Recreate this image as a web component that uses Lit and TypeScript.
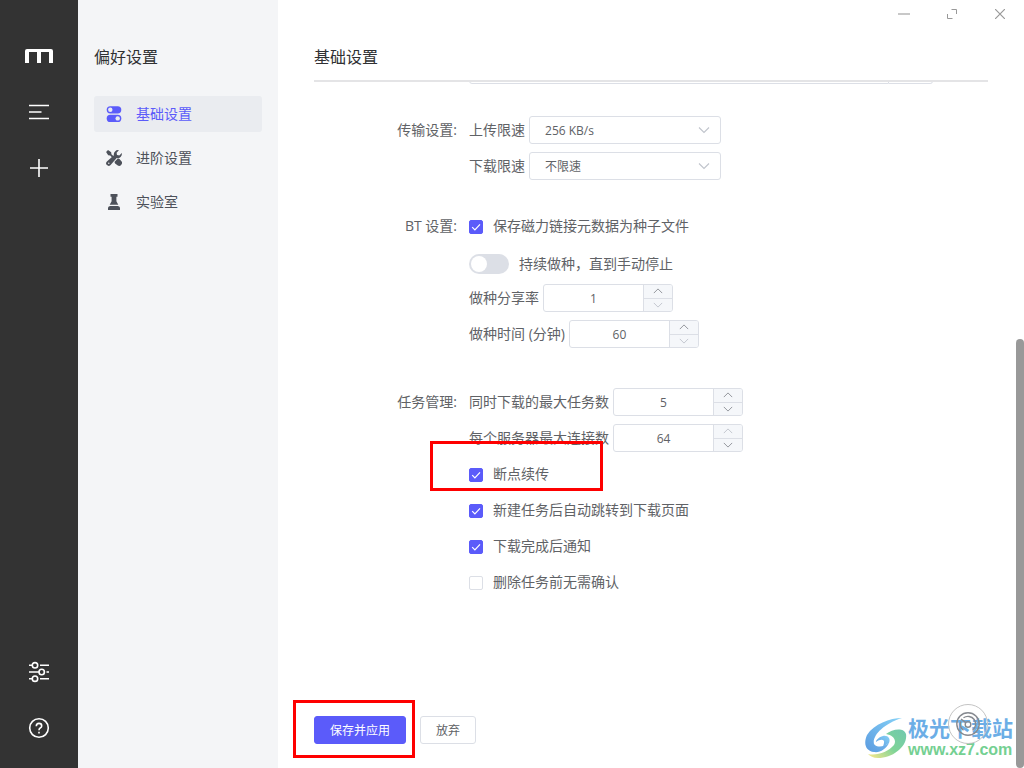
import { LitElement, html, css, svg, nothing } from "lit";
import { customElement, property } from "lit/decorators.js";
import { classMap } from "lit/directives/class-map.js";

const FONT = css`"Open Sans", "Noto Sans CJK SC", sans-serif`;

const chevron = (dir: "up" | "down") => html`
  <svg viewBox="0 0 12 12" width="12" height="12" aria-hidden="true">
    <path d=${dir === "down" ? "M1 3.5 6 8.5 11 3.5" : "M1 8.5 6 3.5 11 8.5"}
      fill="none" stroke="currentColor" stroke-width="1.1" />
  </svg>`;

@customElement("icon-rail")
export class IconRail extends LitElement {
  static styles = css`
    :host {
      display: flex;
      flex-direction: column;
      justify-content: space-between;
      width: 78px;
      flex: none;
      box-sizing: border-box;
      padding: 28px 0 12px;
      background: #333;
    }
    .group { display: flex; flex-direction: column; }
    .item {
      height: 56px;
      padding: 0;
      border: 0;
      background: none;
      color: #fff;
      display: flex;
      align-items: center;
      justify-content: center;
    }
  `;

  render() {
    return html`
      <nav class="group">
        <button class="item" aria-label="Motrix">
          <svg width="28" height="14" viewBox="0 0 28 14">
            <path fill="currentColor" d="M2 0H26Q28 0 28 2V14H24V3H16V14H12V3H4V14H0V2Q0 0 2 0Z" />
          </svg>
        </button>
        <button class="item" aria-label="任务列表">
          <svg width="24" height="24" viewBox="0 0 24 24" fill="none" stroke="currentColor" stroke-width="1.6">
            <path d="M2 5.5H22M2 12H14.5M2 18.5H22" />
          </svg>
        </button>
        <button class="item" aria-label="新建任务">
          <svg width="24" height="24" viewBox="0 0 24 24" fill="none" stroke="currentColor" stroke-width="1.6">
            <path d="M3 12H21M12 3V21" />
          </svg>
        </button>
      </nav>
      <nav class="group">
        <button class="item" aria-label="偏好设置">
          <svg width="24" height="24" viewBox="0 0 24 24" fill="none" stroke="currentColor" stroke-width="1.6">
            <path d="M2 5.3H5M13 5.3H22M2 12H12M19.5 12H22M2 18.7H5M13 18.7H22" />
            <circle cx="8" cy="5.3" r="2.7" />
            <circle cx="14.7" cy="12" r="2.7" />
            <circle cx="8" cy="18.7" r="2.7" />
          </svg>
        </button>
        <button class="item" aria-label="帮助">
          <svg width="24" height="24" viewBox="0 0 24 24" fill="none" stroke="currentColor" stroke-width="1.6">
            <circle cx="12" cy="12" r="9.3" />
            <path d="M9.3 10.2Q9.3 7.4 12 7.4T14.7 9.9Q14.7 11.2 13.2 12Q12 12.7 12 14.2M12 15.8V17.6" />
          </svg>
        </button>
      </nav>
    `;
  }
}

const toggles = svg`
  <rect x="0.7" y="0.2" width="14.6" height="7.2" rx="3.6" fill="currentColor" />
  <circle cx="4.3" cy="3.8" r="2.2" fill="#eaecf0" />
  <rect x="0.7" y="8.8" width="14.6" height="7.2" rx="3.6" fill="currentColor" />
  <circle cx="11.7" cy="12.4" r="2.2" fill="#eaecf0" />`;

const tools = svg`
  <path fill="currentColor" d="M.1 1.9 2 0 5.2 2.2 5.4 4.2 8.4 7.1 7.1 8.4 4.2 5.4 2.2 5.2Z" />
  <path fill="currentColor" d="M15.8 3.1A4.3 4.3 0 0 1 10.7 8.1L4.6 15Q2.7 16.8 .9 15.1T.9 11.4L7.9 5.3A4.3 4.3 0 0 1 12.9 .2L10.6 2.7 11 5 13.3 5.4Z" />
  <path fill="currentColor" d="M8.6 11.8 11.8 8.6Q12.8 8.4 13.5 9.1L15.6 11.4Q16.8 13 15.3 14.7 13.8 16.6 11.8 15.6L9.1 13.4Q8.5 12.7 8.6 11.8Z" />
  <circle cx="2.8" cy="13.3" r="0.7" fill="#f4f5f7" />`;

const lab = svg`
  <path fill="currentColor" d="M4.5 0H11.5V2.8H10.4V7.3L12.3 10.7H3.7L5.6 7.3V2.8H4.5Z" />
  <path fill="currentColor" d="M4 12H12Q14 12.3 14 14V16H2V14Q2 12.3 4 12Z" />`;

@customElement("settings-nav")
export class SettingsNav extends LitElement {
  static styles = css`
    :host {
      display: block;
      width: 200px;
      flex: none;
      box-sizing: border-box;
      padding: 45px 16px 0;
      background: #f4f5f7;
      font-family: ${FONT};
    }
    .title { margin: 0 0 27px; font-size: 16px; line-height: 24px; font-weight: 400; color: #303133; }
    .list { list-style: none; margin: 0; padding: 0; display: flex; flex-direction: column; gap: 8px; }
    .link {
      display: flex;
      align-items: center;
      gap: 14px;
      height: 36px;
      padding: 0 12px;
      border-radius: 3px;
      font-size: 14px;
      line-height: 20px;
      color: #4d515a;
      text-decoration: none;
    }
    .link.active { background: #eaecf0; color: #5b5bfa; }
  `;

  private items = [
    { text: "基础设置", icon: toggles, active: true },
    { text: "进阶设置", icon: tools, active: false },
    { text: "实验室", icon: lab, active: false },
  ];

  render() {
    return html`
      <h2 class="title">偏好设置</h2>
      <ul class="list">
        ${this.items.map((i) => html`
          <li><a href="#" class=${classMap({ link: true, active: i.active })}>
            <svg width="16" height="16" viewBox="0 0 16 16" aria-hidden="true">${i.icon}</svg>${i.text}
          </a></li>`)}
      </ul>
    `;
  }
}

@customElement("number-field")
export class NumberField extends LitElement {
  @property() label = "";
  @property() value = "";
  @property({ type: Boolean }) atmin = false;
  @property({ type: Boolean }) atmax = false;

  static styles = css`
    :host { display: flex; align-items: center; gap: 4px; height: 28px; }
    .box {
      display: flex;
      width: 130px;
      height: 28px;
      box-sizing: border-box;
      border: 1px solid #dcdfe6;
      border-radius: 3px;
      overflow: hidden;
      background: #fff;
    }
    .input {
      flex: 1;
      min-width: 0;
      border: 0;
      padding: 0;
      background: none;
      text-align: center;
      font: 12px ${FONT};
      color: #606266;
      outline: 0;
    }
    .steps {
      display: flex;
      flex-direction: column;
      width: 28px;
      border-left: 1px solid #dcdfe6;
      background: #f5f7fa;
    }
    .step {
      flex: 1;
      min-height: 0;
      display: flex;
      align-items: center;
      justify-content: center;
      border: 0;
      padding: 0;
      background: none;
      color: #8c8f96;
    }
    .step + .step { border-top: 1px solid #dcdfe6; }
    .step:disabled { color: #c0c4cc; }
    .step svg { width: 10px; height: 10px; }
  `;

  render() {
    return html`
      <label for="n">${this.label}</label>
      <div class="box">
        <input class="input" id="n" type="text" inputmode="numeric" .value=${this.value} />
        <div class="steps">
          <button class="step" aria-label="增加" ?disabled=${this.atmax}>${chevron("up")}</button>
          <button class="step" aria-label="减少" ?disabled=${this.atmin}>${chevron("down")}</button>
        </div>
      </div>
    `;
  }
}

@customElement("settings-form")
export class SettingsForm extends LitElement {
  static styles = css`
    :host { display: block; font: 14px/20px ${FONT}; color: #606266; }
    .form { display: flex; flex-direction: column; gap: 32px; }
    .group { display: grid; grid-template-columns: 23% 1fr; }
    .group.spaced { margin-bottom: 8px; }
    .caption { text-align: right; padding-right: 12px; line-height: 28px; }
    .rows { display: flex; flex-direction: column; gap: 8px; }
    .path { display: flex; height: 28px; margin: -26px 55px 0 0; }
    .path-input {
      flex: 1;
      min-width: 0;
      box-sizing: border-box;
      border: 1px solid #dcdfe6;
      border-radius: 3px 0 0 3px;
      background: #fff;
    }
    .path-button {
      width: 44px;
      border: 1px solid #dcdfe6;
      border-left: 0;
      border-radius: 0 3px 3px 0;
      background: #fff;
    }
    .row { display: flex; align-items: center; gap: 4px; height: 28px; }
    .select-wrap { display: grid; width: 192px; align-items: center; color: #c0c4cc; }
    .select-wrap > * { grid-area: 1 / 1; }
    .select-wrap svg { justify-self: end; margin-right: 11px; pointer-events: none; }
    .select {
      appearance: none;
      width: 100%;
      height: 28px;
      padding: 0 30px 0 15px;
      border: 1px solid #dcdfe6;
      border-radius: 3px;
      background: #fff;
      color: #606266;
      font: 12px ${FONT};
    }
    .row.check { gap: 10px; }
    .row.switching { gap: 10px; padding-top: 4px; box-sizing: border-box; }
    .tick { display: grid; flex: none; padding-top: 2px; }
    .tick > * { grid-area: 1 / 1; }
    .tick svg { pointer-events: none; }
    .checkbox {
      appearance: none;
      width: 14px;
      height: 14px;
      margin: 0;
      box-sizing: border-box;
      border: 1px solid #dcdfe6;
      border-radius: 2px;
      background: #fff;
    }
    .checkbox:checked { background: #5b5bfa; border-color: #5b5bfa; }
    .switch {
      appearance: none;
      width: 40px;
      height: 20px;
      margin: 0;
      padding: 2px;
      box-sizing: border-box;
      border-radius: 10px;
      background: #dcdfe6;
    }
    .switch::before { content: ""; display: block; width: 16px; height: 16px; border-radius: 50%; background: #fff; }
  `;

  private check(id: string, text: string, checked: boolean) {
    return html`
      <div class="row check">
        <span class="tick">
          <input class="checkbox" type="checkbox" id=${id} .checked=${checked} />
          ${checked ? html`<svg width="14" height="14" viewBox="0 0 14 14" aria-hidden="true">
            <path d="M3.2 7.2 5.9 9.9 11 4.4" fill="none" stroke="#fff" stroke-width="1.2" /></svg>` : nothing}
        </span>
        <label for=${id}>${text}</label>
      </div>`;
  }

  private select(id: string, text: string, value: string) {
    return html`
      <div class="row">
        <label for=${id}>${text}</label>
        <span class="select-wrap">
          <select class="select" id=${id}><option>${value}</option></select>
          ${chevron("down")}
        </span>
      </div>`;
  }

  render() {
    return html`
      <div class="form">
        <div class="group">
          <span></span>
          <div class="path">
            <input class="path-input" type="text" aria-label="下载路径" />
            <button class="path-button" aria-label="选择文件夹"></button>
          </div>
        </div>
        <div class="group">
          <div class="caption">传输设置:</div>
          <div class="rows">
            ${this.select("up", "上传限速", "256 KB/s")}
            ${this.select("down", "下载限速", "不限速")}
          </div>
        </div>
        <div class="group spaced">
          <div class="caption">BT 设置:</div>
          <div class="rows">
            ${this.check("meta", "保存磁力链接元数据为种子文件", true)}
            <div class="row switching">
              <input class="switch" type="checkbox" role="switch" id="seed" />
              <label for="seed">持续做种，直到手动停止</label>
            </div>
            <number-field label="做种分享率" value="1" atmin></number-field>
            <number-field label="做种时间 (分钟)" value="60" atmin></number-field>
          </div>
        </div>
        <div class="group">
          <div class="caption">任务管理:</div>
          <div class="rows">
            <number-field label="同时下载的最大任务数" value="5"></number-field>
            <number-field label="每个服务器最大连接数" value="64" atmax></number-field>
            ${this.check("resume", "断点续传", true)}
            ${this.check("jump", "新建任务后自动跳转到下载页面", true)}
            ${this.check("notify", "下载完成后通知", true)}
            ${this.check("confirm", "删除任务前无需确认", false)}
          </div>
        </div>
      </div>
    `;
  }
}

@customElement("site-mark")
export class SiteMark extends LitElement {
  static styles = css`
    :host { display: flex; align-items: center; gap: 1px; font-family: ${FONT}; font-weight: 700; }
    .text { display: flex; flex-direction: column; }
    .name { font-size: 21px; line-height: 24px; color: #6caee6; }
    .site { font: 700 16px/20px "Liberation Sans", sans-serif; color: #74d092; }
  `;

  render() {
    return html`
      <svg width="42" height="42" viewBox="0 0 42 42" aria-hidden="true">
        <defs>
          <linearGradient id="b" x1="0" y1="1" x2="1" y2="0">
            <stop offset="0" stop-color="#5b9be0" /><stop offset="1" stop-color="#86d2f7" />
          </linearGradient>
          <linearGradient id="g" x1="0" y1="0.8" x2="1" y2="0">
            <stop offset="0" stop-color="#e8e48c" /><stop offset="0.45" stop-color="#7fd497" /><stop offset="1" stop-color="#70c8b0" />
          </linearGradient>
        </defs>
        <path fill="url(#b)" d="M37 1C25 1 9 7 2 18C-2 27 1 34 9 35C15 36 21 32 24 26C19 30 12 31 9 27C7 19 18 7 37 1Z" />
        <path fill="url(#b)" d="M24 26C26 22 23 18 18 19C14 20 11 23 11 25C15 22 20 22 19 26L18 30Z" />
        <path fill="url(#g)" d="M3 37C12 39 23 35 29 28C32 23 28 18 21 17C27 12 39 10 41 17C43 29 28 41 13 41C8 41 5 39 3 37Z" />
      </svg>
      <div class="text">
        <span class="name">极光下载站</span>
        <span class="site">www.xz7.com</span>
      </div>
    `;
  }
}

@customElement("app-root")
export class AppRoot extends LitElement {
  static styles = css`
    :host {
      display: flex;
      position: relative;
      height: 100vh;
      overflow: hidden;
      background: #fff;
      font-family: ${FONT};
    }
    .main {
      flex: 1;
      min-width: 0;
      display: flex;
      flex-direction: column;
      box-sizing: border-box;
      padding: 45px 36px 24px;
    }
    .title {
      margin: 0;
      padding-bottom: 11px;
      border-bottom: 2px solid #e4e4e6;
      font-size: 16px;
      line-height: 24px;
      font-weight: 400;
      color: #303133;
    }
    .scroller { flex: 1; min-height: 0; overflow: hidden; }
    .actions { display: flex; gap: 14px; }
    .button {
      height: 28px;
      padding: 0 15px;
      border: 1px solid #dcdfe6;
      border-radius: 3px;
      background: #fff;
      color: #606266;
      font: 12px ${FONT};
    }
    .button.primary { background: #5b5bfa; border-color: #5b5bfa; color: #fff; }
    .window { position: absolute; top: 0; right: 0; display: flex; }
    .window-button {
      width: 48px;
      height: 28px;
      padding: 0;
      border: 0;
      background: none;
      color: #999;
      display: flex;
      align-items: center;
      justify-content: center;
    }
    .thumb { position: absolute; right: 0; bottom: 0; width: 8px; height: 429px; border-radius: 4px; background: #999; }
    .speed {
      position: absolute;
      right: 36px;
      bottom: 24px;
      width: 40px;
      height: 40px;
      padding: 0;
      border: 1px solid #c4c4c4;
      border-radius: 50%;
      background: none;
      color: #868a90;
      display: flex;
      align-items: center;
      justify-content: center;
    }
    .mark { position: absolute; right: 11px; bottom: 8px; }
    .frame { position: absolute; box-sizing: border-box; border: 3px solid #fe0000; pointer-events: none; }
    .frame.resume { left: 430px; top: 441px; width: 173px; height: 50px; }
    .frame.save { left: 293px; bottom: 10px; width: 122px; height: 58px; }
  `;

  render() {
    return html`
      <icon-rail></icon-rail>
      <settings-nav></settings-nav>
      <main class="main">
        <h1 class="title">基础设置</h1>
        <div class="scroller"><settings-form></settings-form></div>
        <div class="actions">
          <button class="button primary">保存并应用</button>
          <button class="button">放弃</button>
        </div>
      </main>
      <div class="window">
        <button class="window-button" aria-label="最小化">
          <svg width="12" height="12" viewBox="0 0 12 12"><path d="M0 6H12" stroke="#c8c8c8" stroke-width="2" /></svg>
        </button>
        <button class="window-button" aria-label="最大化">
          <svg width="10" height="10" viewBox="0 0 10 10" fill="none" stroke="currentColor"><path d="M4.5 .5H9.5V5M.5 5V9.5H5.5" /></svg>
        </button>
        <button class="window-button" aria-label="关闭">
          <svg width="10" height="10" viewBox="0 0 10 10" fill="none" stroke="currentColor" stroke-width="1.2"><path d="M0 0 10 10M10 0 0 10" /></svg>
        </button>
      </div>
      <div class="thumb"></div>
      <site-mark class="mark"></site-mark>
      <button class="speed" aria-label="速度">
        <svg width="24" height="24" viewBox="0 0 24 24" fill="none" stroke="currentColor" stroke-width="1.4">
          <circle cx="12" cy="12" r="11.2" />
          <path d="M7.5 5.8A7.6 7.6 0 1 1 16.5 18.2" />
          <path d="M4.8 9.5A7.6 7.6 0 0 0 7.5 18.2" />
          <circle cx="12" cy="12.4" r="2.8" />
          <path d="M5 7 9.8 10.6" />
        </svg>
      </button>
      <div class="frame resume"></div>
      <div class="frame save"></div>
    `;
  }
}
